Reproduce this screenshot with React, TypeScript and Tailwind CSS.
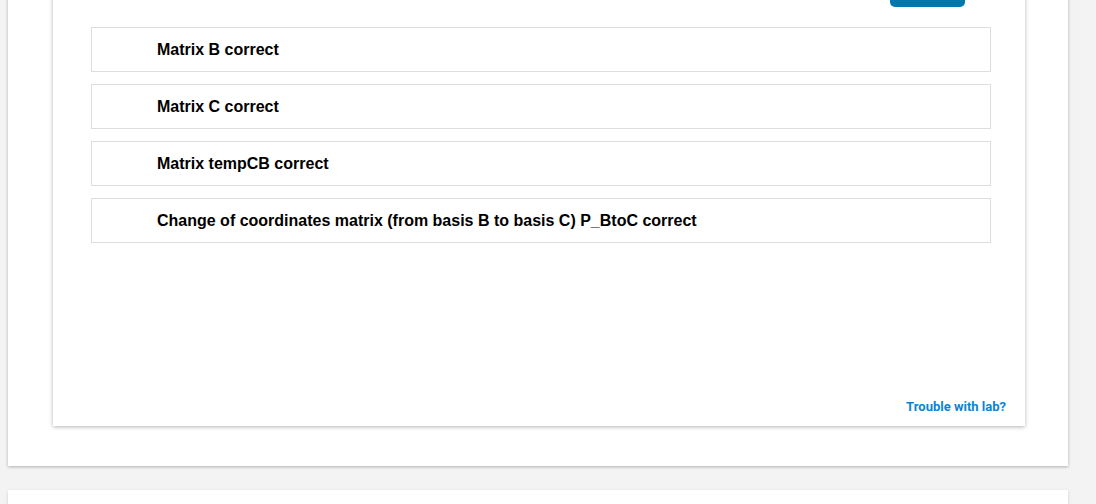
import React from "react";

const checks: string[] = [
  "Matrix B correct",
  "Matrix C correct",
  "Matrix tempCB correct",
  "Change of coordinates matrix (from basis B to basis C) P_BtoC correct",
];

const CheckRow: React.FC<{ label: string }> = ({ label }) => {
  return (
    <div className="h-[45px] border border-[#dedede] flex items-center pl-[65px]">
      <span className="text-[16px] font-bold text-black font-['Liberation_Sans',Arial,sans-serif]">
        {label}
      </span>
    </div>
  );
};

const App: React.FC = () => {
  return (
    <div className="w-[1096px] h-[504px] bg-[#f3f3f3] overflow-hidden">
      <div className="-mt-[40px] flex flex-col">
        <div className="ml-2 w-[1060px] bg-white shadow-[0_1px_3px_rgba(0,0,0,0.28)] pb-[40px]">
          <div className="ml-[45px] w-[972px] h-[466px] bg-white shadow-[0_1px_4px_rgba(0,0,0,0.3)] flex flex-col">
            <div className="flex justify-end pt-[13px] pr-[60px]">
              <button className="w-[75px] h-[34px] rounded-[5px] bg-[#0077ad]" />
            </div>
            <div className="mt-[20px] ml-[38px] w-[900px] flex flex-col gap-[12px]">
              {checks.map((c) => (
                <CheckRow key={c} label={c} />
              ))}
            </div>
            <div className="mt-auto flex justify-end pr-[19px] pb-[10px]">
              <a
                href="#"
                className="text-[13px] font-bold text-[#0a84d6] font-['Roboto',sans-serif]"
              >
                Trouble with lab?
              </a>
            </div>
          </div>
        </div>
        <div className="ml-2 mt-[24px] w-[1060px] h-[200px] bg-white shadow-[0_1px_3px_rgba(0,0,0,0.15)]" />
      </div>
    </div>
  );
};

export default App;
